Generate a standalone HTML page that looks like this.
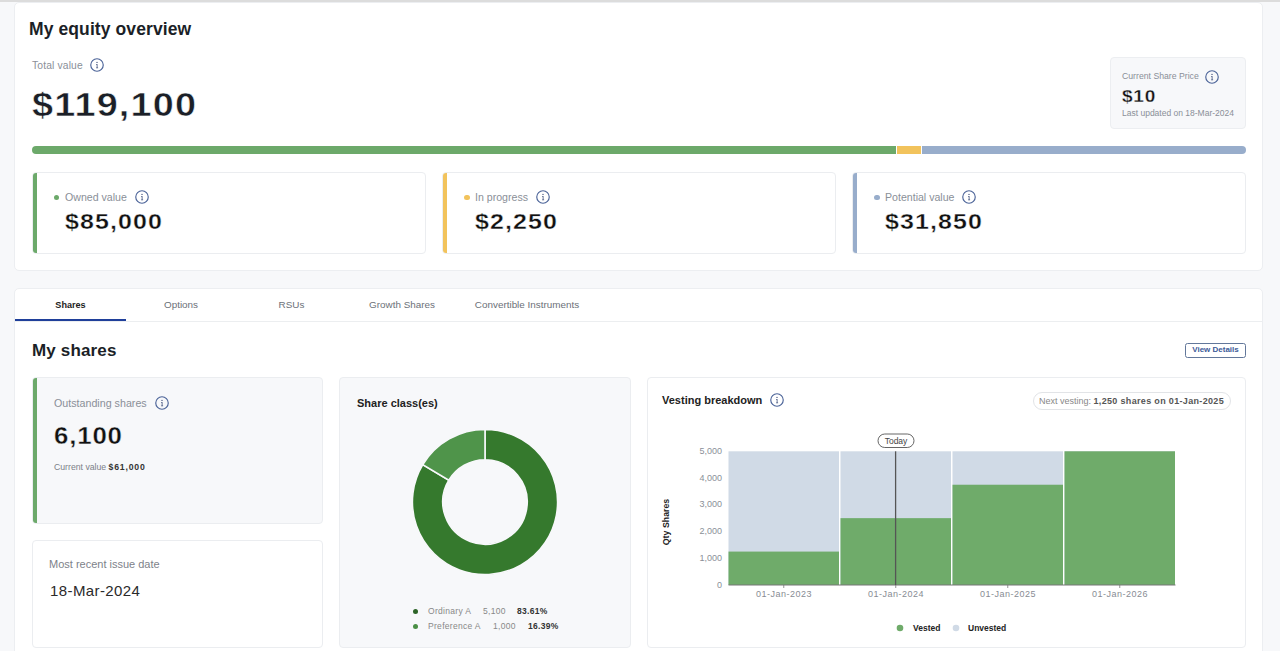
<!DOCTYPE html>
<html><head><meta charset="utf-8">
<style>
*{box-sizing:border-box;margin:0;padding:0}
html,body{width:1280px;height:651px;overflow:hidden}
body{background:#f7f8fa;font-family:"Liberation Sans",sans-serif;position:relative;color:#1b1f27}
.topline{position:absolute;left:0;top:0;width:1280px;height:2px;background:#dcdcdc;z-index:2}
.abs{position:absolute}
.card{position:absolute;background:#fff;border:1px solid #eceef1;border-radius:5px}
.lbl{position:absolute;white-space:nowrap}
.info{position:absolute;width:14px;height:14px}
.sub{position:absolute;background:#fff;border:1px solid #ebedf0;border-radius:4px;overflow:hidden}
.sub .lb{position:absolute;left:0;top:0;bottom:0;width:4px}
.dot{position:absolute;border-radius:50%}
.tab{position:absolute;top:-0.5px;height:33px;font-size:9.9px;color:#6b7078;text-align:center;line-height:33px;white-space:nowrap}
</style></head>
<body>
<div class="topline"></div>

<!-- Card A: equity overview -->
<div class="card" style="left:14px;top:2px;width:1249px;height:269px"></div>
<div class="lbl" style="left:29px;top:19.3px;font-size:17.5px;letter-spacing:0.1px;font-weight:bold;color:#1b1f27">My equity overview</div>
<div class="lbl" style="left:32px;top:59.8px;font-size:10.3px;letter-spacing:0.15px;color:#8a8f98">Total value</div>
<svg class="info" style="left:90px;top:58px" viewBox="0 0 14 14"><circle cx="7" cy="7" r="6.25" fill="none" stroke="#4b6398" stroke-width="1.15"/><circle cx="7" cy="4.4" r="0.7" fill="#45557f"/><path d="M6.1 6.1H7.5V9.6H8.1V10.2H6.1V9.6H6.7V6.7H6.1Z" fill="#45557f"/></svg>
<div class="lbl" style="left:32px;top:85.5px;font-size:33.5px;letter-spacing:1.05px;font-weight:bold;color:#1b1f27;-webkit-text-stroke:0.5px #fff;transform:scaleX(1.13);transform-origin:0 0">$119,100</div>

<!-- share price box -->
<div class="abs" style="left:1110px;top:57px;width:136px;height:72px;background:#f7f8fa;border:1px solid #eceef1;border-radius:4px"></div>
<div class="lbl" style="left:1122px;top:71.4px;font-size:8.7px;color:#8a8f98">Current Share Price</div>
<svg class="info" style="left:1205px;top:70px" viewBox="0 0 14 14"><circle cx="7" cy="7" r="6.25" fill="none" stroke="#4b6398" stroke-width="1.15"/><circle cx="7" cy="4.4" r="0.7" fill="#45557f"/><path d="M6.1 6.1H7.5V9.6H8.1V10.2H6.1V9.6H6.7V6.7H6.1Z" fill="#45557f"/></svg>
<div class="lbl" style="left:1122px;top:87px;font-size:17px;letter-spacing:0.7px;font-weight:bold;color:#111;-webkit-text-stroke:0.3px #f7f8fa;transform:scaleX(1.12);transform-origin:0 0">$10</div>
<div class="lbl" style="left:1122px;top:107.5px;font-size:8.5px;color:#8a8f98">Last updated on 18-Mar-2024</div>

<!-- progress bar -->
<div class="abs" style="left:32px;top:146px;width:864px;height:8px;background:#6ca96a;border-radius:4px 0 0 4px"></div>
<div class="abs" style="left:897px;top:146px;width:24px;height:8px;background:#f2c35c"></div>
<div class="abs" style="left:922px;top:146px;width:324px;height:8px;background:#98adcb;border-radius:0 4px 4px 0"></div>

<!-- three value cards -->
<div class="sub" style="left:32px;top:172px;width:394px;height:82px"><div class="lb" style="background:#6ca96a"></div></div>
<div class="dot" style="left:53.5px;top:194.5px;width:5.5px;height:5.5px;background:#6ca96a"></div>
<div class="lbl" style="left:65px;top:190.8px;font-size:10.6px;color:#8a8f98">Owned value</div>
<svg class="info" style="left:135px;top:190px" viewBox="0 0 14 14"><circle cx="7" cy="7" r="6.25" fill="none" stroke="#4b6398" stroke-width="1.15"/><circle cx="7" cy="4.4" r="0.7" fill="#45557f"/><path d="M6.1 6.1H7.5V9.6H8.1V10.2H6.1V9.6H6.7V6.7H6.1Z" fill="#45557f"/></svg>
<div class="lbl" style="left:65px;top:209px;font-size:22.3px;letter-spacing:1.0px;font-weight:bold;color:#111;-webkit-text-stroke:0.35px #fff;transform:scaleX(1.12);transform-origin:0 0">$85,000</div>

<div class="sub" style="left:442px;top:172px;width:394px;height:82px"><div class="lb" style="background:#f2c35c"></div></div>
<div class="dot" style="left:464px;top:194.5px;width:5.5px;height:5.5px;background:#f2c35c"></div>
<div class="lbl" style="left:475px;top:190.8px;font-size:10.6px;color:#8a8f98">In progress</div>
<svg class="info" style="left:536px;top:190px" viewBox="0 0 14 14"><circle cx="7" cy="7" r="6.25" fill="none" stroke="#4b6398" stroke-width="1.15"/><circle cx="7" cy="4.4" r="0.7" fill="#45557f"/><path d="M6.1 6.1H7.5V9.6H8.1V10.2H6.1V9.6H6.7V6.7H6.1Z" fill="#45557f"/></svg>
<div class="lbl" style="left:475px;top:209px;font-size:22.3px;letter-spacing:1.0px;font-weight:bold;color:#111;-webkit-text-stroke:0.35px #fff;transform:scaleX(1.12);transform-origin:0 0">$2,250</div>

<div class="sub" style="left:852px;top:172px;width:394px;height:82px"><div class="lb" style="background:#98adcb"></div></div>
<div class="dot" style="left:874.3px;top:194.5px;width:5.5px;height:5.5px;background:#98adcb"></div>
<div class="lbl" style="left:885px;top:190.8px;font-size:10.6px;color:#8a8f98">Potential value</div>
<svg class="info" style="left:962px;top:190px" viewBox="0 0 14 14"><circle cx="7" cy="7" r="6.25" fill="none" stroke="#4b6398" stroke-width="1.15"/><circle cx="7" cy="4.4" r="0.7" fill="#45557f"/><path d="M6.1 6.1H7.5V9.6H8.1V10.2H6.1V9.6H6.7V6.7H6.1Z" fill="#45557f"/></svg>
<div class="lbl" style="left:885px;top:209px;font-size:22.3px;letter-spacing:1.0px;font-weight:bold;color:#111;-webkit-text-stroke:0.35px #fff;transform:scaleX(1.12);transform-origin:0 0">$31,850</div>

<!-- Card B -->
<div class="card" style="left:14px;top:287.5px;width:1249px;height:400px"></div>
<div class="abs" style="left:15px;top:321px;width:1247px;height:1px;background:#eceef0"></div>
<div class="abs" style="left:15px;top:288px;height:33px;width:600px">
  <div class="tab" style="left:0;width:111px;color:#222;font-weight:bold;font-size:9.1px;top:1px">Shares</div>
  <div class="tab" style="left:111px;width:110px">Options</div>
  <div class="tab" style="left:221px;width:111px">RSUs</div>
  <div class="tab" style="left:332px;width:110px">Growth Shares</div>
  <div class="tab" style="left:442px;width:140px">Convertible Instruments</div>
</div>
<div class="abs" style="left:15px;top:319px;width:111px;height:2px;background:#1f3f9a"></div>

<div class="lbl" style="left:32px;top:341px;font-size:17px;letter-spacing:0.15px;font-weight:bold;color:#1b1f27">My shares</div>
<div class="abs" style="left:1185px;top:343px;width:61px;height:15px;border:1px solid #62779a;border-radius:2.5px;font-size:8px;font-weight:bold;color:#3d5a98;text-align:center;line-height:12px">View Details</div>

<!-- Outstanding shares -->
<div class="sub" style="left:32px;top:377px;width:291px;height:147px;background:#f7f8fa"><div class="lb" style="background:#6ca96a"></div></div>
<div class="lbl" style="left:54px;top:397px;font-size:10.7px;color:#8a8f98">Outstanding shares</div>
<svg class="info" style="left:155px;top:396px" viewBox="0 0 14 14"><circle cx="7" cy="7" r="6.25" fill="none" stroke="#4b6398" stroke-width="1.15"/><circle cx="7" cy="4.4" r="0.7" fill="#45557f"/><path d="M6.1 6.1H7.5V9.6H8.1V10.2H6.1V9.6H6.7V6.7H6.1Z" fill="#45557f"/></svg>
<div class="lbl" style="left:54px;top:423.3px;font-size:23.5px;letter-spacing:0.75px;font-weight:bold;color:#111;-webkit-text-stroke:0.35px #f7f8fa;transform:scaleX(1.1);transform-origin:0 0">6,100</div>
<div class="lbl" style="left:54px;top:462.3px;font-size:8.7px;color:#7b8088">Current value <b style="color:#333;letter-spacing:0.8px">$61,000</b></div>

<!-- issue date -->
<div class="sub" style="left:32px;top:540px;width:291px;height:108px"></div>
<div class="lbl" style="left:49px;top:558px;font-size:11px;color:#7d828a">Most recent issue date</div>
<div class="lbl" style="left:50px;top:582px;font-size:15px;letter-spacing:0.4px;color:#2a2a2a">18-Mar-2024</div>

<!-- Share class -->
<div class="sub" style="left:339px;top:377px;width:292px;height:271px;background:#f7f8fa"></div>
<div class="lbl" style="left:357px;top:397px;font-size:11px;font-weight:bold;color:#222">Share class(es)</div>
<svg class="abs" style="left:405px;top:422px" width="160" height="160" viewBox="0 0 160 160">
  <path d="M80.00 7.40A72.6 72.6 0 1 1 17.77 42.61L43.83 58.27A42.2 42.2 0 1 0 80.00 37.80Z" fill="#35792d" stroke="#f7f8fa" stroke-width="1.6"/>
  <path d="M17.77 42.61A72.6 72.6 0 0 1 80.00 7.40L80.00 37.80A42.2 42.2 0 0 0 43.83 58.27Z" fill="#4f944a" stroke="#f7f8fa" stroke-width="1.6"/>
</svg>
<div class="dot" style="left:413px;top:608.5px;width:5px;height:5px;background:#2d6427"></div>
<div class="lbl" style="left:428px;top:606px;font-size:8.5px;letter-spacing:0.3px;color:#888">Ordinary A</div>
<div class="lbl" style="left:483px;top:606px;font-size:8.5px;letter-spacing:0.3px;color:#888">5,100</div>
<div class="lbl" style="left:517px;top:606px;font-size:8.5px;letter-spacing:0.3px;font-weight:bold;color:#333">83.61%</div>
<div class="dot" style="left:413px;top:623.5px;width:5px;height:5px;background:#4a8f45"></div>
<div class="lbl" style="left:428px;top:621px;font-size:8.5px;letter-spacing:0.3px;color:#888">Preference A</div>
<div class="lbl" style="left:493px;top:621px;font-size:8.5px;letter-spacing:0.3px;color:#888">1,000</div>
<div class="lbl" style="left:528px;top:621px;font-size:8.5px;letter-spacing:0.3px;font-weight:bold;color:#333">16.39%</div>

<!-- Vesting breakdown -->
<div class="sub" style="left:647px;top:377px;width:599px;height:271px"></div>
<div class="lbl" style="left:662px;top:394px;font-size:11px;font-weight:bold;color:#222">Vesting breakdown</div>
<svg class="info" style="left:770px;top:393px" viewBox="0 0 14 14"><circle cx="7" cy="7" r="6.25" fill="none" stroke="#4b6398" stroke-width="1.15"/><circle cx="7" cy="4.4" r="0.7" fill="#45557f"/><path d="M6.1 6.1H7.5V9.6H8.1V10.2H6.1V9.6H6.7V6.7H6.1Z" fill="#45557f"/></svg>
<div class="abs" style="left:1033px;top:392px;width:198px;height:18px;border:1px solid #e2e4e7;border-radius:9px;font-size:9px;line-height:16px;padding-left:5px;white-space:nowrap;color:#888">Next vesting: <b style="color:#555;letter-spacing:0.33px">1,250 shares on 01-Jan-2025</b></div>

<svg class="abs" style="left:650px;top:420px;font-family:'Liberation Sans',sans-serif" width="595" height="225" viewBox="0 0 595 225">
<rect x="78.50" y="31.30" width="110.50" height="133.70" fill="#d0dae6"/>
<rect x="78.50" y="131.58" width="110.50" height="33.42" fill="#6fab6a"/>
<line x1="133.75" y1="165.00" x2="133.75" y2="168.00" stroke="#888" stroke-width="0.9"/>
<text x="134.00" y="177.40" text-anchor="middle" font-size="9" letter-spacing="0.5" fill="#888c94">01-Jan-2023</text>
<rect x="190.50" y="31.30" width="110.50" height="133.70" fill="#d0dae6"/>
<rect x="190.50" y="98.15" width="110.50" height="66.85" fill="#6fab6a"/>
<line x1="245.75" y1="165.00" x2="245.75" y2="168.00" stroke="#888" stroke-width="0.9"/>
<text x="246.00" y="177.40" text-anchor="middle" font-size="9" letter-spacing="0.5" fill="#888c94">01-Jan-2024</text>
<rect x="302.50" y="31.30" width="110.50" height="133.70" fill="#d0dae6"/>
<rect x="302.50" y="64.73" width="110.50" height="100.27" fill="#6fab6a"/>
<line x1="357.75" y1="165.00" x2="357.75" y2="168.00" stroke="#888" stroke-width="0.9"/>
<text x="358.00" y="177.40" text-anchor="middle" font-size="9" letter-spacing="0.5" fill="#888c94">01-Jan-2025</text>
<rect x="414.50" y="31.30" width="110.50" height="133.70" fill="#d0dae6"/>
<rect x="414.50" y="31.30" width="110.50" height="133.70" fill="#6fab6a"/>
<line x1="469.75" y1="165.00" x2="469.75" y2="168.00" stroke="#888" stroke-width="0.9"/>
<text x="470.00" y="177.40" text-anchor="middle" font-size="9" letter-spacing="0.5" fill="#888c94">01-Jan-2026</text>
<text x="72.00" y="167.60" text-anchor="end" font-size="9" fill="#8a8f98">0</text>
<text x="72.00" y="140.86" text-anchor="end" font-size="9" fill="#8a8f98">1,000</text>
<text x="72.00" y="114.12" text-anchor="end" font-size="9" fill="#8a8f98">2,000</text>
<text x="72.00" y="87.38" text-anchor="end" font-size="9" fill="#8a8f98">3,000</text>
<text x="72.00" y="60.64" text-anchor="end" font-size="9" fill="#8a8f98">4,000</text>
<text x="72.00" y="33.90" text-anchor="end" font-size="9" fill="#8a8f98">5,000</text>
<line x1="78.50" y1="165.00" x2="525.50" y2="165.00" stroke="#777" stroke-width="1"/>
<line x1="245.60" y1="31.30" x2="245.60" y2="165.00" stroke="#555" stroke-width="1.3"/>
<rect x="228.00" y="14.00" width="36" height="13.5" rx="6.75" fill="#fff" stroke="#666" stroke-width="1"/>
<text x="246.00" y="23.80" text-anchor="middle" font-size="8.5" fill="#444">Today</text>
<text transform="translate(19.00 102.00) rotate(-90)" text-anchor="middle" font-size="8.8" font-weight="bold" fill="#222">Qty Shares</text>
<circle cx="250.00" cy="208.00" r="3.3" fill="#6fab6a"/>
<text x="263.00" y="211.00" font-size="8.5" font-weight="bold" fill="#222">Vested</text>
<circle cx="306.00" cy="208.00" r="3.3" fill="#d0dae6"/>
<text x="318.00" y="211.00" font-size="8.5" font-weight="bold" fill="#222">Unvested</text>
</svg>
</body></html>
